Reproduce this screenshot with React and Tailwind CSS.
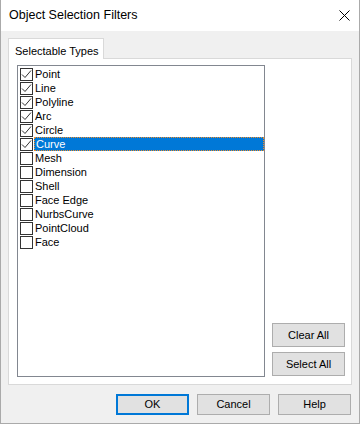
import React from "react";

const items = [
  { name: "Point", checked: true },
  { name: "Line", checked: true },
  { name: "Polyline", checked: true },
  { name: "Arc", checked: true },
  { name: "Circle", checked: true },
  { name: "Curve", checked: true, selected: true },
  { name: "Mesh" },
  { name: "Dimension" },
  { name: "Shell" },
  { name: "Face Edge" },
  { name: "NurbsCurve" },
  { name: "PointCloud" },
  { name: "Face" },
];

function CheckBox({ checked }) {
  return (
    <div className="w-[13px] h-[13px] border border-[#333333] bg-white shrink-0 flex items-center justify-center">
      {checked && (
        <svg width="11" height="11" viewBox="0 0 11 11">
          <path d="M1 5.5 L4 8.5 L10 1.5" fill="none" stroke="#333333" strokeWidth="1" />
        </svg>
      )}
    </div>
  );
}

function Button({ children, focused, className = "" }) {
  return (
    <div
      className={`w-[73px] flex items-center justify-center bg-[#e1e1e1] text-[11px] text-black ${
        focused ? "border-2 border-[#0078d7]" : "border border-[#adadad]"
      } ${className}`}
    >
      {children}
    </div>
  );
}

export default function App() {
  return (
    <div
      className="w-[360px] h-[424px] border border-[#aaaaaa] border-t-0 bg-[#f0f0f0] flex flex-col"
      style={{ fontFamily: "'Liberation Sans', Arial, sans-serif" }}
    >
      {/* Title bar */}
      <div className="h-[31px] bg-white flex items-center justify-between pl-2 pr-[9px] shrink-0">
        <span className="text-[12.5px] text-black">Object Selection Filters</span>
        <svg width="11" height="11" viewBox="0 0 11 11">
          <path d="M0.5 0.5 L10.5 10.5 M10.5 0.5 L0.5 10.5" stroke="#000" strokeWidth="1" />
        </svg>
      </div>

      {/* Body */}
      <div className="px-[7px] pt-[7px] flex flex-col">
        {/* Tab header */}
        <div className="flex">
          <div className="relative z-10 w-[96px] h-[21px] -mb-px bg-white border border-b-0 border-[#d9d9d9] pl-[6px] pt-[4px] text-[11px] text-black">
            Selectable Types
          </div>
        </div>

        {/* Tab panel */}
        <div className="h-[327px] bg-white border border-[#d9d9d9] flex pl-2 pt-[6px] pr-[5px]">
          {/* List box */}
          <div className="w-[248px] h-[312px] border border-[#828790] bg-white pt-px">
            {items.map((it) => (
              <div key={it.name} className="h-[14px] flex items-center pl-[2px]">
                <CheckBox checked={it.checked} />
                <div
                  className={`ml-px flex-1 h-[14px] flex items-center text-[11px] pl-px ${
                    it.selected
                      ? "bg-[#0078d7] text-white border border-dotted border-[#f08c28]"
                      : "text-black"
                  }`}
                >
                  {it.name}
                </div>
              </div>
            ))}
          </div>

          {/* Right buttons */}
          <div className="ml-[7px] flex flex-col justify-end gap-[5px] pb-[8px]">
            <Button className="h-[24px]">Clear All</Button>
            <Button className="h-[24px]">Select All</Button>
          </div>
        </div>

        {/* Bottom buttons */}
        <div className="flex justify-end gap-[8px] mt-[9px] pr-px">
          <Button focused className="h-[21px]">OK</Button>
          <Button className="h-[21px]">Cancel</Button>
          <Button className="h-[21px]">Help</Button>
        </div>
      </div>
    </div>
  );
}
